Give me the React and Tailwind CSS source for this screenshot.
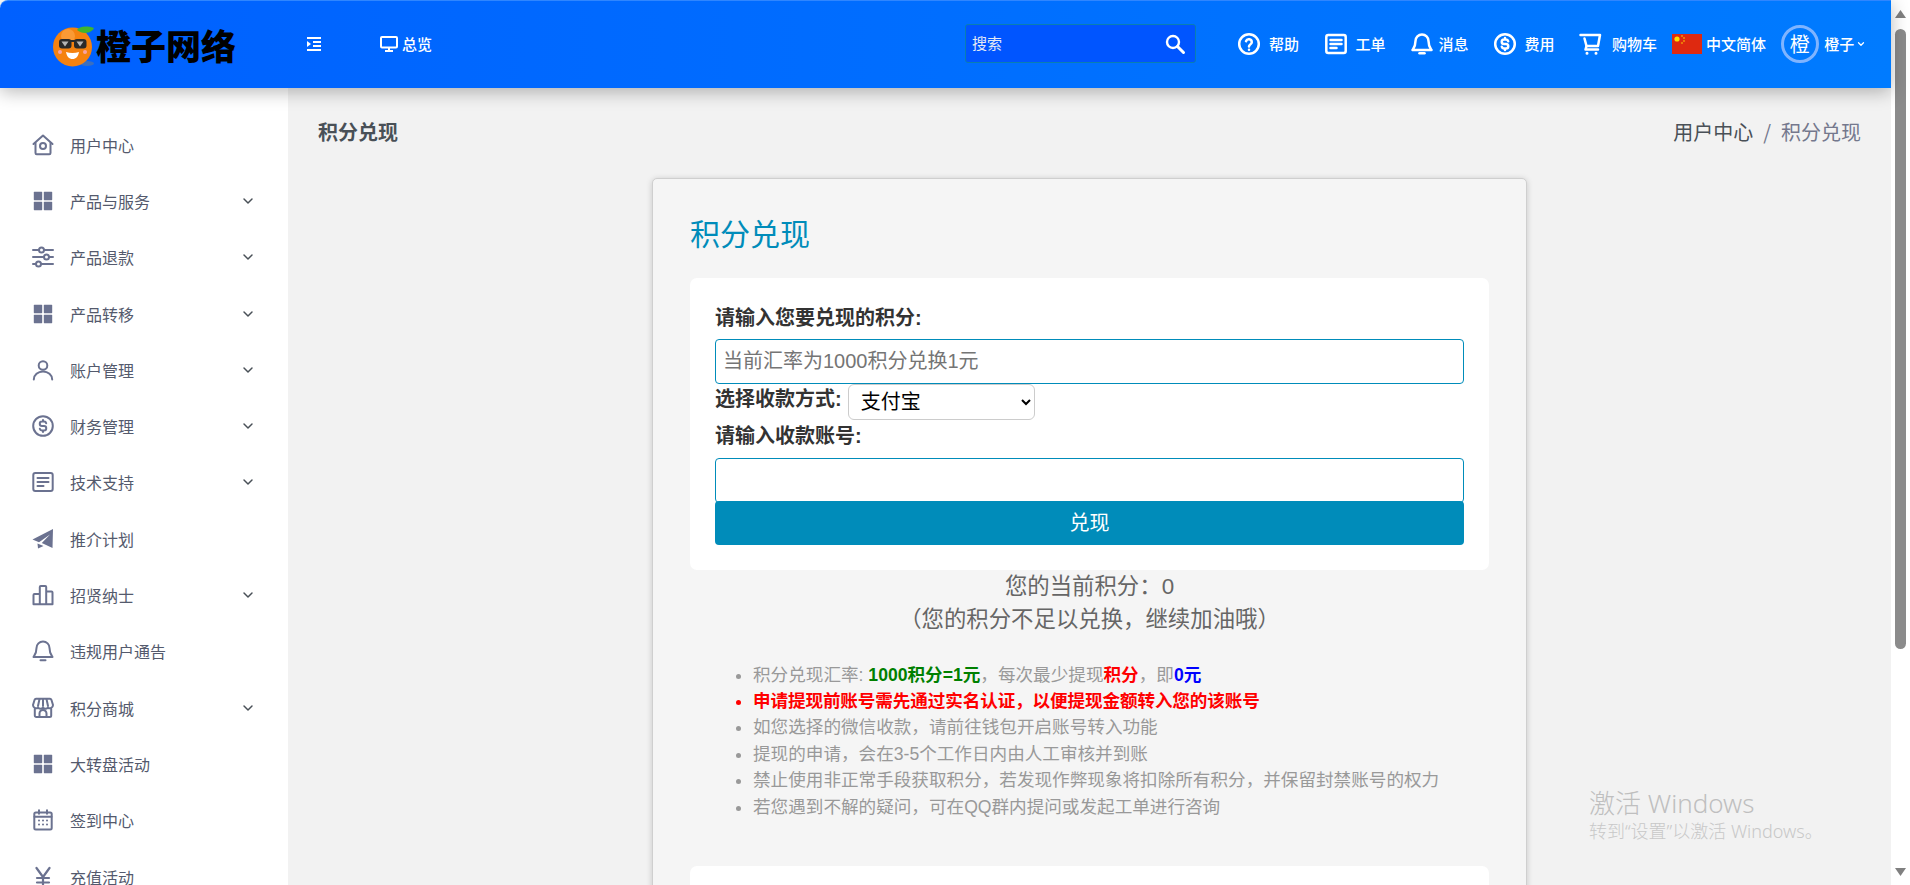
import React from "react";
import { ChevronDown } from "lucide-react";

const S = ({ children, size = 24, sw = 2, className = "" }) => (
  <svg width={size} height={size} viewBox="0 0 24 24" fill="none" stroke="currentColor" strokeWidth={sw} strokeLinecap="round" strokeLinejoin="round" className={"shrink-0 " + className}>
    {children}
  </svg>
);

const Grid = () => (
  <S sw={0}>
    <g fill="currentColor">
      <rect x="2.8" y="2.8" width="8.4" height="8.4" rx="0.6" />
      <rect x="12.8" y="2.8" width="8.4" height="8.4" rx="0.6" />
      <rect x="2.8" y="12.8" width="8.4" height="8.4" rx="0.6" />
      <rect x="12.8" y="12.8" width="8.4" height="8.4" rx="0.6" />
    </g>
  </S>
);
const Home = () => (
  <S>
    <path d="M2.5 11 12 2.5 21.5 11" />
    <path d="M4.5 10v10a1.2 1.2 0 0 0 1.2 1.2h12.6a1.2 1.2 0 0 0 1.2-1.2V10" />
    <circle cx="12" cy="13" r="3" />
  </S>
);
const Sliders = () => (
  <S>
    <path d="M2 5h6M13 5h9M2 12h11M18 12h4M2 19h3M10 19h12" />
    <circle cx="10.5" cy="5" r="2.5" />
    <circle cx="15.5" cy="12" r="2.5" />
    <circle cx="7.5" cy="19" r="2.5" />
  </S>
);
const User = () => (
  <S>
    <circle cx="12" cy="7.5" r="4.3" />
    <path d="M2.8 21.5a9.2 8 0 0 1 18.4 0" />
  </S>
);
const Dollar = ({ size = 24, sw = 2 }) => (
  <S size={size} sw={sw}>
    <circle cx="12" cy="12" r="9.8" />
    <path d="M15.2 9.2a2.2 2.2 0 0 0-2.2-1.7h-2a2.2 2.2 0 0 0 0 4.5h2a2.2 2.2 0 0 1 0 4.5h-2a2.2 2.2 0 0 1-2.2-1.7M12 6v1.5M12 16.500v1.500" />
  </S>
);
const News = ({ size = 24, sw = 2 }) => (
  <S size={size} sw={sw}>
    <rect x="2.300" y="3" width="19.400" height="18" rx="2" />
    <path d="M6.500 8h11M6.500 12h11M6.500 16h6" />
  </S>
);
const Plane = () => (
  <S sw={0}>
    <path fill="currentColor" d="M22 2 1.500 12.500 8 15.200 19 7.500 10.800 16 21.500 21z" />
    <path fill="currentColor" d="M6.500 16.500 7 21.500 12.500 19z" />
  </S>
);
const Bars = () => (
  <S>
    <path d="M2.500 21.200V12a1 1 0 0 1 1-1h5.300M8.800 21.200V4a1 1 0 0 1 1-1h4.400a1 1 0 0 1 1 1v17.200M15.200 8.500h5.300a1 1 0 0 1 1 1v11.700M2.500 21.200h19" />
  </S>
);
const Bell = ({ size = 24, sw = 2 }) => (
  <S size={size} sw={sw}>
    <path d="M12 2.500a6.500 6.500 0 0 0-6.500 6.500c0 5.500-2 7.500-3 9h19c-1-1.500-3-3.500-3-9A6.500 6.500 0 0 0 12 2.500z" />
    <path d="M9.500 21.300h5" />
  </S>
);
const Store = () => (
  <S>
    <path d="M5 2.800h14a1.500 1.500 0 0 1 1.400 1L22 9a3.300 3.300 0 0 1-5 2.800 4 4 0 0 1-5 0 4 4 0 0 1-5 0A3.300 3.300 0 0 1 2 9l1.600-5.200a1.500 1.500 0 0 1 1.400-1z" />
    <path d="M8.500 3 7 10M15.500 3 17 10M12 3v7" />
    <path d="M3.800 13v6.500a1.500 1.500 0 0 0 1.500 1.500h13.400a1.500 1.500 0 0 0 1.500-1.500V13M8.500 21v-3.500a3.500 3.500 0 0 1 7 0V21" />
  </S>
);
const Calendar = () => (
  <S>
    <rect x="3.300" y="4.500" width="17.400" height="17" rx="1.500" />
    <path d="M8 2.300v3.500M16 2.300v3.500M3.500 8.800h17" />
    <path d="M8 12.500h.01M12 12.500h.01M16 12.500h.01M8 16.500h.01M12 16.500h.01M16 16.500h.01" />
  </S>
);
const Yen = () => (
  <S sw={2.200}>
    <path d="M5.500 3 12 12l6.500-9M12 12v10M6 13h12M6 17.500h12" />
  </S>
);

const NAV = [
  ["用户中心", Home, false],
  ["产品与服务", Grid, true],
  ["产品退款", Sliders, true],
  ["产品转移", Grid, true],
  ["账户管理", User, true],
  ["财务管理", Dollar, true],
  ["技术支持", News, true],
  ["推介计划", Plane, false],
  ["招贤纳士", Bars, true],
  ["违规用户通告", Bell, false],
  ["积分商城", Store, true],
  ["大转盘活动", Grid, false],
  ["签到中心", Calendar, false],
  ["充值活动", Yen, false],
];

const HeadItem = ({ icon, label, gap, ml }) => (
  <div className={`flex items-center shrink-0 text-white ${ml} ${gap}`}>
    {icon}
    <span className="text-[15px] leading-[22px] font-medium whitespace-nowrap">{label}</span>
  </div>
);

const Logo = () => (
  <svg width="46" height="42" viewBox="0 0 46 42" className="shrink-0 mt-[4px]">
    <ellipse cx="34" cy="38.500" rx="7" ry="2.500" fill="#3a6fc0" />
    <circle cx="19.500" cy="22" r="19.500" fill="#f5820f" />
    <circle cx="15" cy="11" r="7" fill="#fa9a35" />
    <path d="M24 5c2-3 8-5 17-2-2 5-11 7-17 2z" fill="#3fb52e" />
    <rect x="6" y="14" width="12.500" height="9.500" rx="3" fill="#2a2a2a" />
    <rect x="21" y="14" width="12.500" height="9.500" rx="3" fill="#2a2a2a" />
    <rect x="18" y="15" width="4" height="2" fill="#2a2a2a" />
    <path d="M8.500 16.500h7l-3.500 5zM23.500 16.500h7l-3.500 5z" fill="#b5b5b5" />
    <path d="M13 27c4 1.200 9 1.200 13 0-.8 4.500-3 7-6.500 7S13.800 31.500 13 27z" fill="#fff" />
    <circle cx="7" cy="27" r="2" fill="#f7a3a3" />
    <circle cx="32" cy="27" r="2" fill="#f7a3a3" />
  </svg>
);

const Flag = () => (
  <svg width="30" height="20" viewBox="0 0 30 20" className="shrink-0">
    <rect width="30" height="20" fill="#de2910" />
    <circle cx="5" cy="5" r="2.600" fill="#ffde00" />
    <circle cx="10" cy="2" r="0.800" fill="#ffde00" />
    <circle cx="12" cy="4" r="0.800" fill="#ffde00" />
    <circle cx="12" cy="7" r="0.800" fill="#ffde00" />
    <circle cx="10" cy="9" r="0.800" fill="#ffde00" />
  </svg>
);

const Header = () => (
  <header className="relative z-10 h-[88px] shrink-0 flex items-center rounded-tl-[8px] border-t border-[#2f86ff] bg-linear-to-r from-[#0060ff] to-[#007bff] shadow-[0_4px_18px_rgba(0,0,0,0.28)] pl-[53px] pb-[2px]">
    <Logo />
    <span className="-ml-[3px] shrink-0 mt-[3px] text-[35px] leading-[40px] font-black text-black whitespace-nowrap">橙子网络</span>
    <svg width="14" height="14" viewBox="0 0 14 14" className="ml-[71px] shrink-0 text-white" fill="currentColor">
      <rect x="0" y="0" width="14" height="2" />
      <rect x="6" y="4" width="8" height="2" />
      <rect x="6" y="8" width="8" height="2" />
      <rect x="0" y="12" width="14" height="2" />
      <path d="M0 4l4 3-4 3z" />
    </svg>
    <div className="ml-[59px] shrink-0 flex items-center gap-[4px] text-white">
      <svg width="18" height="16" viewBox="0 0 18 16" fill="none" stroke="currentColor" strokeWidth="2">
        <rect x="1" y="1" width="16" height="10.500" rx="1" />
        <path d="M9 11.500V15M5 15h8" />
      </svg>
      <span className="text-[15px] leading-[22px] font-medium whitespace-nowrap">总览</span>
    </div>

    <div className="ml-[533px] shrink-0 w-[231px] h-[39px] flex items-center border border-[#0a7fb0] rounded-[3px] bg-[#0055ff] pl-[6px] pr-[9px]">
      <input
        placeholder="搜索"
        className="flex-1 min-w-0 bg-transparent outline-none text-[15px] text-white placeholder:text-[#e4e9f5]"
      />
      <svg width="22" height="22" viewBox="0 0 22 22" fill="none" stroke="#fff" strokeWidth="2.400" strokeLinecap="round" className="shrink-0">
        <circle cx="9" cy="9" r="6" />
        <path d="M13.500 13.500 19.500 19.500" strokeWidth="3" />
      </svg>
    </div>

    <HeadItem
      ml="ml-[41px]"
      gap="gap-[8px]"
      label="帮助"
      icon={
        <S sw={2.500}>
          <circle cx="12" cy="12" r="9.800" />
          <path d="M9 9.200a3 3 0 0 1 5.800 1c0 2-2.800 2.300-2.800 4.300" />
          <path d="M12 17.800h.01" />
        </S>
      }
    />
    <HeadItem ml="ml-[24.500px]" gap="gap-[8px]" label="工单" icon={<News sw={2.500} />} />
    <HeadItem ml="ml-[24.500px]" gap="gap-[4.500px]" label="消息" icon={<Bell sw={2.500} />} />
    <HeadItem ml="ml-[24px]" gap="gap-[8px]" label="费用" icon={<Dollar sw={2.500} />} />
    <HeadItem
      ml="ml-[24px]"
      gap="gap-[9.500px]"
      label="购物车"
      icon={
        <S sw={2.500}>
          <path d="M1.500 3h19.500l-2 11H7.500L5.500 6.500" />
          <path d="M7.500 14l-1 3.500H19" />
          <path d="M8 21.300h.01M17 21.300h.01" strokeWidth="3" />
        </S>
      }
    />
    <div className="ml-[14.500px] shrink-0 flex items-center gap-[4.500px]">
      <Flag />
      <span className="text-[15px] leading-[22px] font-medium text-white whitespace-nowrap">中文简体</span>
    </div>
    <div className="ml-[14.500px] w-[38px] h-[38px] shrink-0 rounded-full border-[3px] border-[#7fb4ff] flex items-center justify-center text-white text-[20px] leading-none">橙</div>
    <span className="ml-[5.500px] shrink-0 text-[15px] leading-[22px] font-medium text-white whitespace-nowrap">橙子</span>
    <ChevronDown size={10} strokeWidth={3} className="ml-[2px] shrink-0 text-white" />
  </header>
);

const Sidebar = () => (
  <aside className="w-[288px] shrink-0 bg-white pt-[28.500px] overflow-hidden">
    {NAV.map(([label, Icon, arrow]) => (
      <div key={label} className="h-[56.300px] flex items-center pl-[31px] pr-[32px]">
        <span className="w-[24px] h-[24px] text-[#6b7290] shrink-0">
          <Icon />
        </span>
        <span className="ml-[15px] flex-1 text-[16px] leading-[24px] text-[#545a6d] whitespace-nowrap">{label}</span>
        {arrow && <ChevronDown size={16} strokeWidth={2.200} className="text-[#495057]" />}
      </div>
    ))}
  </aside>
);

const notes = [
  <>如您选择的微信收款，请前往钱包开启账号转入功能</>,
  <>提现的申请，会在3-5个工作日内由人工审核并到账</>,
  <>禁止使用非正常手段获取积分，若发现作弊现象将扣除所有积分，并保留封禁账号的权力</>,
  <>若您遇到不解的疑问，可在QQ群内提问或发起工单进行咨询</>,
];

const Card = () => (
  <section className="w-[875px] mx-auto mt-[2px] rounded-[5px] border border-[#cfcfcf] bg-[#f5f5f5] pl-[37px] pr-[37px] pt-[38px] shadow-[0_1px_6px_rgba(0,0,0,0.18)] font-['Liberation_Sans','Noto_Sans_CJK_SC',sans-serif]">
    <h2 className="text-[30px] leading-[36px] font-normal text-[#008cba] mb-[25px]">积分兑现</h2>
    <div className="rounded-[7px] bg-white pl-[25px] pr-[25px] pt-[25px] pb-[25px]">
      <label className="block text-[20px] leading-[30px] font-bold text-[#333] mb-[6px]">请输入您要兑现的积分:</label>
      <input
        placeholder="当前汇率为1000积分兑换1元"
        className="block w-full h-[45px] rounded-[4px] border border-[#008cba] bg-white px-[7px] text-[20px] outline-none placeholder:text-[#757575]"
      />
      <div className="flex items-start gap-[6px] h-[37px]">
        <label className="text-[20px] leading-[30px] font-bold text-[#333]">选择收款方式:</label>
        <select className="w-[187px] h-[36px] rounded-[6px] border border-[#ccc] bg-white pl-[8px] text-[20px] text-black">
          <option>支付宝</option>
          <option>微信</option>
        </select>
      </div>
      <label className="block text-[20px] leading-[30px] font-bold text-[#333] mb-[7px]">请输入收款账号:</label>
      <input className="block w-full h-[45px] -mb-[2px] rounded-[4px] border border-[#008cba] bg-white px-[7px] text-[20px] outline-none" />
      <button className="relative block w-full h-[44px] rounded-[4px] bg-[#008cba] text-[20px] text-white">兑现</button>
    </div>

    <div className="text-center text-[22.400px] leading-[33px] text-[#666]">
      <p>您的当前积分：0</p>
      <p>（您的积分不足以兑换，继续加油哦）</p>
    </div>

    <ul className="mt-[25.500px] pl-[63px] list-disc text-[17.600px] leading-[26.400px] text-[#999]">
      <li>
        积分兑现汇率: <b className="text-[#008000]">1000积分=1元</b>，每次最少提现<b className="text-[#f00]">积分</b>，即<b className="text-[#00f]">0元</b>
      </li>
      <li className="text-[#f00] font-bold tracking-[-0.12px]">申请提现前账号需先通过实名认证，以便提现金额转入您的该账号</li>
      {notes.map((n, i) => (
        <li key={i}>{n}</li>
      ))}
    </ul>

    <div className="mt-[46px] h-[200px] rounded-[7px] bg-white" />
  </section>
);

const Main = () => (
  <main className="flex-1 min-w-0 bg-[#f2f2f2] overflow-hidden">
    <div className="h-[88px] flex items-center justify-between px-[30px]">
      <h1 className="text-[20px] leading-[28px] font-bold text-[#495057]">积分兑现</h1>
      <div className="flex items-center text-[20px] leading-[28px]">
        <span className="text-[#495057]">用户中心</span>
        <span className="mx-[10px] text-[#74788d]">/</span>
        <span className="text-[#74788d]">积分兑现</span>
      </div>
    </div>
    <Card />
  </main>
);

const Scrollbar = () => (
  <div className="w-[19px] shrink-0 bg-white flex flex-col items-center">
    <svg width="11" height="8" viewBox="0 0 11 8" className="mt-[10px] shrink-0">
      <path d="M5.500 0 11 8H0z" fill="#808080" />
    </svg>
    <div className="mt-[11px] w-[11px] h-[620px] rounded-full bg-[#8b8b8b]" />
    <svg width="11" height="8" viewBox="0 0 11 8" className="mt-auto mb-[9px] shrink-0">
      <path d="M5.500 8 11 0H0z" fill="#808080" />
    </svg>
  </div>
);

export default function App() {
  return (
    <div className="relative w-[1910px] h-[885px] flex overflow-hidden bg-white font-['Noto_Sans_CJK_SC','Noto_Sans',sans-serif]">
      <div className="w-[1891px] shrink-0 flex flex-col">
        <Header />
        <div className="flex flex-1 min-h-0">
          <Sidebar />
          <Main />
        </div>
      </div>
      <Scrollbar />
      <div className="absolute left-[1589px] top-[786px] pointer-events-none font-['Noto_Sans','Noto_Sans_CJK_SC',sans-serif] font-light">
        <div className="text-[26px] leading-[34px] text-[#bfbfbf] whitespace-nowrap">激活 Windows</div>
        <div className="text-[18px] leading-[22px] text-[#c8c8c8] whitespace-nowrap">转到“设置”以激活 Windows。</div>
      </div>
    </div>
  );
}
